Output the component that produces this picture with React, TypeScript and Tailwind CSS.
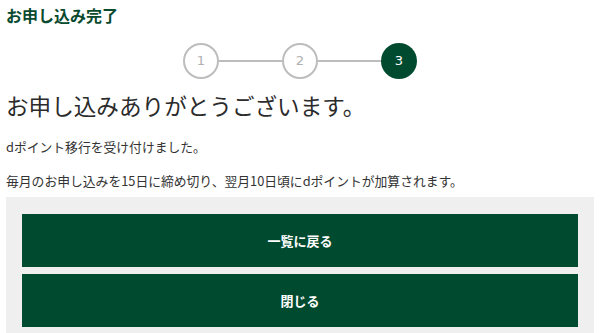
const jp = "font-['Noto_Sans_CJK_JP','Noto_Sans',sans-serif]";

function Step({ n, active }: { n: number; active?: boolean }) {
  return (
    <div
      className={
        active
          ? "flex h-[36px] w-[36px] items-center justify-center rounded-full bg-[#004a2f] text-[13px] text-white font-['DejaVu_Sans',sans-serif]"
          : "flex h-[36px] w-[36px] items-center justify-center rounded-full border-2 border-[#bdbdbd] bg-white text-[13px] text-[#b0b0b0] font-['DejaVu_Sans',sans-serif]"
      }
    >
      {n}
    </div>
  );
}

export default function App() {
  return (
    <div className={`h-[333px] w-[600px] overflow-hidden bg-white px-[6px] ${jp}`}>
      <h1 className="pt-[5px] text-[16px] font-bold leading-[20px] text-[#0a4a2f]">お申し込み完了</h1>

      <div className="mt-[18px] flex items-center justify-center">
        <Step n={1} />
        <div className="h-[2px] w-[63px] bg-[#bdbdbd]" />
        <Step n={2} />
        <div className="h-[2px] w-[63px] bg-[#bdbdbd]" />
        <Step n={3} active />
      </div>

      <h2 className="mt-[12px] text-[22.6px] font-normal leading-[30px] text-[#2b2b2b]">
        お申し込みありがとうございます。
      </h2>
      <p className="mt-[17px] text-[12.8px] leading-[18px] text-[#333]">dポイント移行を受け付けました。</p>
      <p className="mt-[16px] text-[12.8px] leading-[18px] text-[#333]">
        毎月のお申し込みを15日に締め切り、翌月10日頃にdポイントが加算されます。
      </p>

      <div className="mt-[7px] flex flex-col gap-[7px] bg-[#efefef] px-[16px] pt-[17px] pb-[16px]">
        <button
          type="button"
          className="h-[53px] w-full bg-[#004a2f] text-[13px] font-bold text-white"
        >
          一覧に戻る
        </button>
        <button
          type="button"
          className="h-[53px] w-full bg-[#004a2f] text-[13px] font-bold text-white"
        >
          閉じる
        </button>
      </div>
    </div>
  );
}
